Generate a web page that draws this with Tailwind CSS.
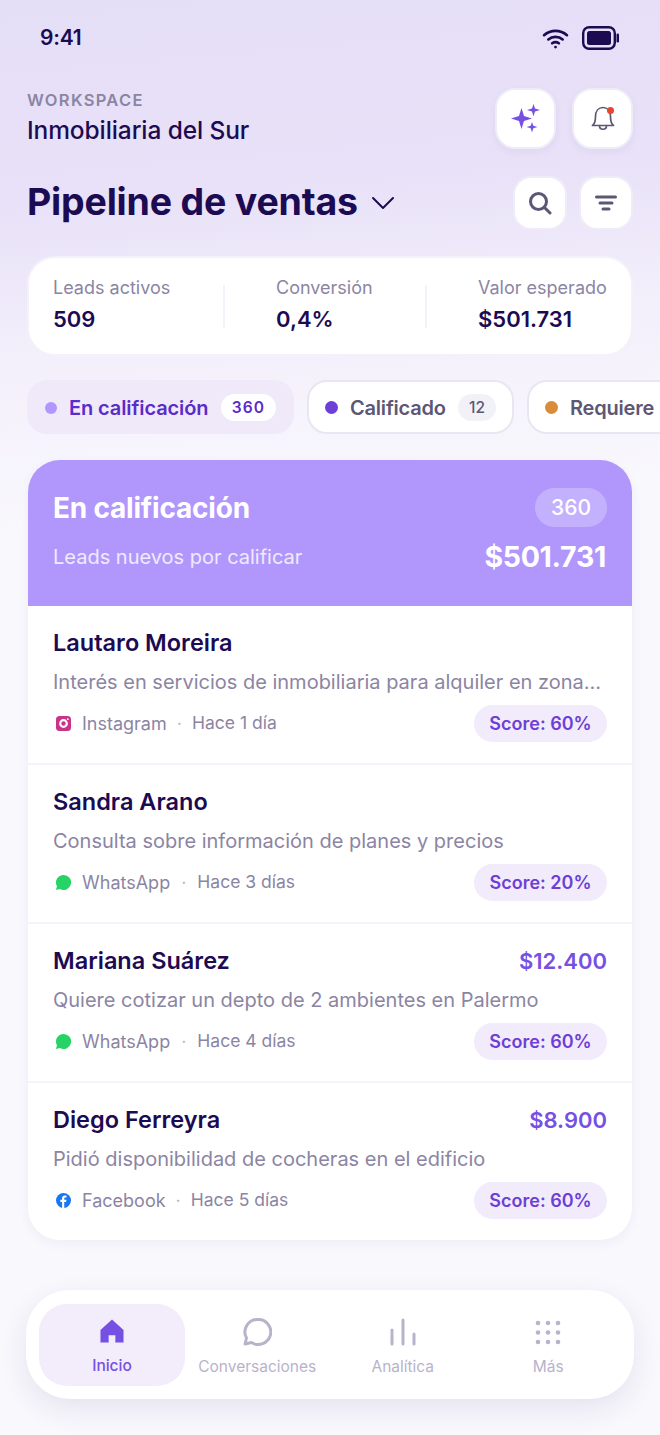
<!DOCTYPE html>
<html lang="es">
<head>
    <meta charset="UTF-8">
    <meta name="viewport" content="width=device-width, initial-scale=1.0">
    <title>Pipeline de ventas</title>
    <script src="https://cdn.jsdelivr.net/npm/@tailwindcss/browser@4"></script>
</head>
<body class="font-['Inter',sans-serif] text-[#1c0b52]">
<div class="w-[660px] h-[1435px] overflow-hidden bg-[linear-gradient(175deg,#e5def7_0%,#e8e1f8_14%,#f3effb_24%,#f9f8fd_36%,#f9f8fd_100%)]">
    <!-- status bar -->
    <div class="h-[76px] pl-[40px] pr-[41px] flex justify-between items-center">
        <span class="text-[21px] font-semibold tracking-[-0.2px]">9:41</span>
        <div class="flex items-center gap-[13px]">
            <svg width="27" height="21" viewBox="0 0 28 22" fill="none" stroke="#1c0b52" stroke-width="2.8" stroke-linecap="round"><path d="M2 7.500C9 1.500 19 1.500 26 7.500"/><path d="M6.500 12C10.700 8.500 17.300 8.500 21.500 12"/><path d="M10.500 16C12.500 14.600 15.500 14.600 17.500 16"/><circle cx="14" cy="20" r="1.500" fill="#1c0b52" stroke="none"/></svg>
            <svg width="37" height="24" viewBox="0 0 37 24"><rect x="1.200" y="1.200" width="31.600" height="21.600" rx="6" fill="none" stroke="#1c0b52" stroke-width="2.400"/><rect x="5" y="5" width="24" height="14" rx="2.500" fill="#1c0b52"/><rect x="34.500" y="7.500" width="2.500" height="9" rx="1.200" fill="#1c0b52"/></svg>
        </div>
    </div>

    <!-- workspace -->
    <div class="h-[61px] mt-[12px] pl-[27px] pr-[27px] flex justify-between items-center">
        <div class="-mt-[3px]">
            <div class="text-[16.500px] font-semibold tracking-[1.300px] text-[#8b85a3] leading-[24px]">WORKSPACE</div>
            <div class="text-[24.500px] font-medium leading-[32px] tracking-[-0.100px] mt-[2px]">Inmobiliaria del Sur</div>
        </div>
        <div class="flex gap-[16px]">
            <button class="w-[61px] h-[61px] rounded-[20px] bg-white border-2 border-[#efecf8] shadow-[0_3px_8px_rgba(60,40,120,0.05)] flex items-center justify-center">
                <svg width="30" height="30" viewBox="0 0 30 30" fill="#7650e3"><path d="M10.500 4L13 12L21 14.500L13 17L10.500 25L8 17L0 14.500L8 12Z"/><path d="M22.500 0L24 4.500L29 6L24 7.500L22.500 12.500L21 7.500L16 6L21 4.500Z"/><path d="M21 18L22.300 21.700L26.500 23L22.300 24.300L21 28.500L19.700 24.300L15.500 23L19.700 21.700Z"/></svg>
            </button>
            <button class="relative w-[61px] h-[61px] rounded-[20px] bg-white border-2 border-[#efecf8] shadow-[0_3px_8px_rgba(60,40,120,0.05)] flex items-center justify-center">
                <svg width="24" height="25" viewBox="0 0 24 25" fill="none" stroke="#5d5775" stroke-width="1.700" stroke-linecap="round" stroke-linejoin="round"><path d="M1.500 19.500C3.500 18 4.500 16 4.500 10.500C4.500 5 7.500 1.500 12 1.500C16.500 1.500 19.500 5 19.500 10.500C19.500 16 20.500 18 22.500 19.500Z"/><path d="M8.500 19.500C8.500 24.500 15.500 24.500 15.500 19.500"/></svg>
                <span class="absolute top-[17px] right-[17px] w-[7px] h-[7px] rounded-full bg-[#e8452f]"></span>
            </button>
        </div>
    </div>

    <!-- title -->
    <div class="h-[54px] mt-[27px] pl-[27px] pr-[27px] flex justify-between items-center">
        <div class="flex items-center gap-[13px]">
            <h1 class="-mt-[2px] text-[37.500px] font-bold tracking-[-0.200px] leading-[54px]">Pipeline de ventas</h1>
            <svg width="24" height="14" viewBox="0 0 24 14" fill="none" stroke="#1c0b52" stroke-width="2" stroke-linecap="round" stroke-linejoin="round"><path d="M2 2L12 12L22 2"/></svg>
        </div>
        <div class="flex gap-[12px]">
            <button class="w-[54px] h-[54px] rounded-[18px] bg-white border-2 border-[#efecf8] flex items-center justify-center">
                <svg width="24" height="24" viewBox="0 0 24 24" fill="none" stroke="#5d5775" stroke-width="3" stroke-linecap="round"><circle cx="10.500" cy="10.500" r="8"/><path d="M17 17L22 22"/></svg>
            </button>
            <button class="w-[54px] h-[54px] rounded-[18px] bg-white border-2 border-[#efecf8] flex items-center justify-center">
                <svg width="24" height="18" viewBox="0 0 24 18" fill="none" stroke="#5d5775" stroke-width="3" stroke-linecap="round"><path d="M2.500 3H21.500"/><path d="M6 9H18"/><path d="M9 15H15"/></svg>
            </button>
        </div>
    </div>

    <!-- stats -->
    <div class="h-[100px] mt-[26px] mx-[27px] rounded-[28px] bg-white border-2 border-[#f3f1fa] flex items-center pl-[24px]">
        <div class="w-[170px]">
            <div class="text-[18px] text-[#8b85a3] leading-[26px]">Leads activos</div>
            <div class="text-[22px] font-semibold leading-[36px]">509</div>
        </div>
        <span class="w-[2px] h-[43px] bg-[#f3f1fa]"></span>
        <div class="w-[200px] pl-[51px]">
            <div class="text-[18px] text-[#8b85a3] leading-[26px]">Conversión</div>
            <div class="text-[22px] font-semibold leading-[36px]">0,4%</div>
        </div>
        <span class="w-[2px] h-[43px] bg-[#f3f1fa]"></span>
        <div class="pl-[51px]">
            <div class="text-[18px] text-[#8b85a3] leading-[26px] whitespace-nowrap">Valor esperado</div>
            <div class="text-[22px] font-semibold leading-[36px]">$501.731</div>
        </div>
    </div>

    <!-- chips -->
    <div class="h-[54px] mt-[24px] pl-[27px] flex gap-[13px] overflow-hidden">
        <div class="w-[267px] shrink-0 rounded-[20px] bg-[#efe9fa] flex items-center pl-[18px] pr-[18px] pt-[1px]">
            <span class="w-[12px] h-[12px] rounded-full bg-[#b197fc]"></span>
            <span class="ml-[12px] text-[20px] font-semibold text-[#5a2cc9] tracking-[-0.100px]">En calificación</span>
            <span class="ml-auto w-[55px] h-[27px] rounded-full bg-white flex items-center justify-center text-[15.500px] font-semibold tracking-[1.200px] text-[#5a2cc9]">360</span>
        </div>
        <div class="w-[207px] shrink-0 rounded-[20px] bg-white border-2 border-[#e9e6f3] flex items-center pl-[16px] pr-[16px] pt-[1px]">
            <span class="w-[13px] h-[13px] rounded-full bg-[#6d3fd6]"></span>
            <span class="ml-[12px] text-[20px] font-semibold text-[#5d5775] tracking-[-0.200px]">Calificado</span>
            <span class="ml-auto w-[38px] h-[27px] rounded-full bg-[#f3f1f8] flex items-center justify-center text-[15.500px] font-medium text-[#5d5775]">12</span>
        </div>
        <div class="w-[200px] shrink-0 rounded-[20px] bg-white border-2 border-[#e9e6f3] flex items-center pl-[16px] pt-[1px]">
            <span class="w-[13px] h-[13px] rounded-full bg-[#d98c3a]"></span>
            <span class="ml-[12px] text-[20px] font-semibold text-[#5d5775] tracking-[-0.200px]">Requiere</span>
        </div>
    </div>

    <!-- lead list -->
    <div class="mt-[26px] mx-[28px] rounded-[32px] bg-white shadow-[0_4px_12px_rgba(60,40,120,0.05)] overflow-hidden">
        <div class="h-[146px] bg-[#b197fc] pl-[25px] pr-[26px] pt-[28px] text-white">
            <div class="flex justify-between items-center h-[39px]">
                <span class="text-[28px] font-bold tracking-[-0.200px]">En calificación</span>
                <span class="mr-[-1px] w-[72px] h-[39px] rounded-full bg-white/25 flex items-center justify-center text-[21px] font-medium">360</span>
            </div>
            <div class="flex justify-between items-center mt-[9px]">
                <span class="text-[20px] text-white/80">Leads nuevos por calificar</span>
                <span class="text-[28.500px] font-bold tracking-[-0.300px]">$501.731</span>
            </div>
        </div>

        <div class="h-[159px] pl-[25px] pr-[25px] pt-[19px] border-b-2 border-[#f4f2fa]">
            <div class="h-[36px] flex items-center text-[23.500px] font-semibold">Lautaro Moreira</div>
            <div class="mt-[5px] text-[20px] leading-[32px] text-[#8b85a3] whitespace-nowrap">Interés en servicios de inmobiliaria para alquiler en zona...</div>
            <div class="mt-[7px] flex items-center h-[37px] text-[18px] text-[#8b85a3]">
                <svg width="15" height="15" viewBox="0 0 15 15" class="ml-[3px]"><rect width="15" height="15" rx="3.500" fill="#c9348a"/><circle cx="7.500" cy="7.500" r="3.300" fill="none" stroke="#fff" stroke-width="2.200"/><circle cx="11.800" cy="3.200" r="0.900" fill="#fff"/></svg>
                <span class="ml-[11px]">Instagram</span>
                <span class="mx-[10px] text-[#b9b5c9]">·</span>
                <span class="text-[17.500px]">Hace 1 día</span>
                <span class="ml-auto w-[133px] h-[37px] rounded-full bg-[#f1ebfb] flex items-center justify-center text-[18px] font-semibold text-[#6d3fd6]">Score: 60%</span>
            </div>
        </div>

        <div class="h-[159px] pl-[25px] pr-[25px] pt-[19px] border-b-2 border-[#f4f2fa]">
            <div class="h-[36px] flex items-center text-[23.500px] font-semibold">Sandra Arano</div>
            <div class="mt-[5px] text-[20px] leading-[32px] text-[#8b85a3] whitespace-nowrap">Consulta sobre información de planes y precios</div>
            <div class="mt-[7px] flex items-center h-[37px] text-[18px] text-[#8b85a3]">
                <svg width="17" height="17" viewBox="0 0 18 18" class="ml-[2px]"><path d="M9 1a8 8 0 1 1-3.800 15L1 17l1.100-4A8 8 0 0 1 9 1Z" fill="#25d366"/></svg>
                <span class="ml-[10px]">WhatsApp</span>
                <span class="mx-[11px] text-[#b9b5c9]">·</span>
                <span class="text-[17.500px]">Hace 3 días</span>
                <span class="ml-auto w-[133px] h-[37px] rounded-full bg-[#f1ebfb] flex items-center justify-center text-[18px] font-semibold text-[#6d3fd6]">Score: 20%</span>
            </div>
        </div>

        <div class="h-[159px] pl-[25px] pr-[25px] pt-[19px] border-b-2 border-[#f4f2fa]">
            <div class="h-[36px] flex items-center justify-between text-[23.500px] font-semibold">
                <span>Mariana Suárez</span>
                <span class="text-[22px] text-[#7650e3]">$12.400</span>
            </div>
            <div class="mt-[5px] text-[20px] leading-[32px] text-[#8b85a3] whitespace-nowrap">Quiere cotizar un depto de 2 ambientes en Palermo</div>
            <div class="mt-[7px] flex items-center h-[37px] text-[18px] text-[#8b85a3]">
                <svg width="17" height="17" viewBox="0 0 18 18" class="ml-[2px]"><path d="M9 1a8 8 0 1 1-3.800 15L1 17l1.100-4A8 8 0 0 1 9 1Z" fill="#25d366"/></svg>
                <span class="ml-[10px]">WhatsApp</span>
                <span class="mx-[11px] text-[#b9b5c9]">·</span>
                <span class="text-[17.500px]">Hace 4 días</span>
                <span class="ml-auto w-[133px] h-[37px] rounded-full bg-[#f1ebfb] flex items-center justify-center text-[18px] font-semibold text-[#6d3fd6]">Score: 60%</span>
            </div>
        </div>

        <div class="h-[157px] pl-[25px] pr-[25px] pt-[19px]">
            <div class="h-[36px] flex items-center justify-between text-[23.500px] font-semibold">
                <span>Diego Ferreyra</span>
                <span class="text-[22px] text-[#7650e3]">$8.900</span>
            </div>
            <div class="mt-[5px] text-[20px] leading-[32px] text-[#8b85a3] whitespace-nowrap">Pidió disponibilidad de cocheras en el edificio</div>
            <div class="mt-[7px] flex items-center h-[37px] text-[18px] text-[#8b85a3]">
                <svg width="15" height="15" viewBox="0 0 16 16" class="ml-[3px]"><circle cx="8" cy="8" r="8" fill="#1877f2"/><path d="M8.800 16V9.500h2l.4-2.300H8.800V6c0-.8.300-1.200 1.200-1.200h1.200V2.800c-.5-.1-1.100-.2-1.700-.2-1.900 0-3 1.100-3 3v1.600H4.600v2.300h1.900V16Z" fill="#fff"/></svg>
                <span class="ml-[11px]">Facebook</span>
                <span class="mx-[10px] text-[#b9b5c9]">·</span>
                <span class="text-[17.500px]">Hace 5 días</span>
                <span class="ml-auto w-[133px] h-[37px] rounded-full bg-[#f1ebfb] flex items-center justify-center text-[18px] font-semibold text-[#6d3fd6]">Score: 60%</span>
            </div>
        </div>
    </div>

    <!-- bottom nav -->
    <nav class="h-[109px] mt-[50px] mx-[26px] rounded-[44px] bg-white shadow-[0_10px_28px_rgba(60,40,120,0.10)] pl-[13px] pr-[13px] grid grid-cols-4 items-center">
        <a class="h-[82px] rounded-[28px] bg-[#f2ecfb] flex flex-col items-center pt-[15px] w-[146px]">
            <svg width="26" height="24" viewBox="0 0 26 25" fill="#7650e3"><path d="M13 0.500L25 11.500V24.500H16.500V17H9.500V24.500H1V11.500Z"/></svg>
            <span class="mt-[13px] text-[15.500px] font-medium text-[#7650e3] leading-[20px]">Inicio</span>
        </a>
        <a class="h-[82px] flex flex-col items-center pt-[13px] whitespace-nowrap">
            <svg width="30" height="30" viewBox="0 0 30 30" fill="none" stroke="#b8b3cb" stroke-width="3" stroke-linejoin="round"><path d="M16 2.500A12.500 12.500 0 1 1 9.500 25.500L3 27L4.500 21A12.500 12.500 0 0 1 16 2.500Z"/></svg>
            <span class="mt-[10px] text-[15.500px] text-[#b8b3cb] leading-[20px]">Conversaciones</span>
        </a>
        <a class="h-[82px] flex flex-col items-center pt-[13px]">
            <svg width="28" height="30" viewBox="0 0 28 30" fill="none" stroke="#b8b3cb" stroke-width="3" stroke-linecap="round"><path d="M3 13V27"/><path d="M14 3V27"/><path d="M25 17V27"/></svg>
            <span class="mt-[10px] text-[15.500px] text-[#b8b3cb] leading-[20px]">Analítica</span>
        </a>
        <a class="h-[82px] flex flex-col items-center pt-[13px]">
            <svg width="26" height="30" viewBox="0 0 26 30" fill="#b8b3cb"><circle cx="3" cy="6" r="2.300"/><circle cx="13" cy="6" r="2.300"/><circle cx="23" cy="6" r="2.300"/><circle cx="3" cy="15.500" r="2.300"/><circle cx="13" cy="15.500" r="2.300"/><circle cx="23" cy="15.500" r="2.300"/><circle cx="3" cy="25" r="2.300"/><circle cx="13" cy="25" r="2.300"/><circle cx="23" cy="25" r="2.300"/></svg>
            <span class="mt-[10px] text-[15.500px] text-[#b8b3cb] leading-[20px]">Más</span>
        </a>
    </nav>
</div>
</body>
</html>
